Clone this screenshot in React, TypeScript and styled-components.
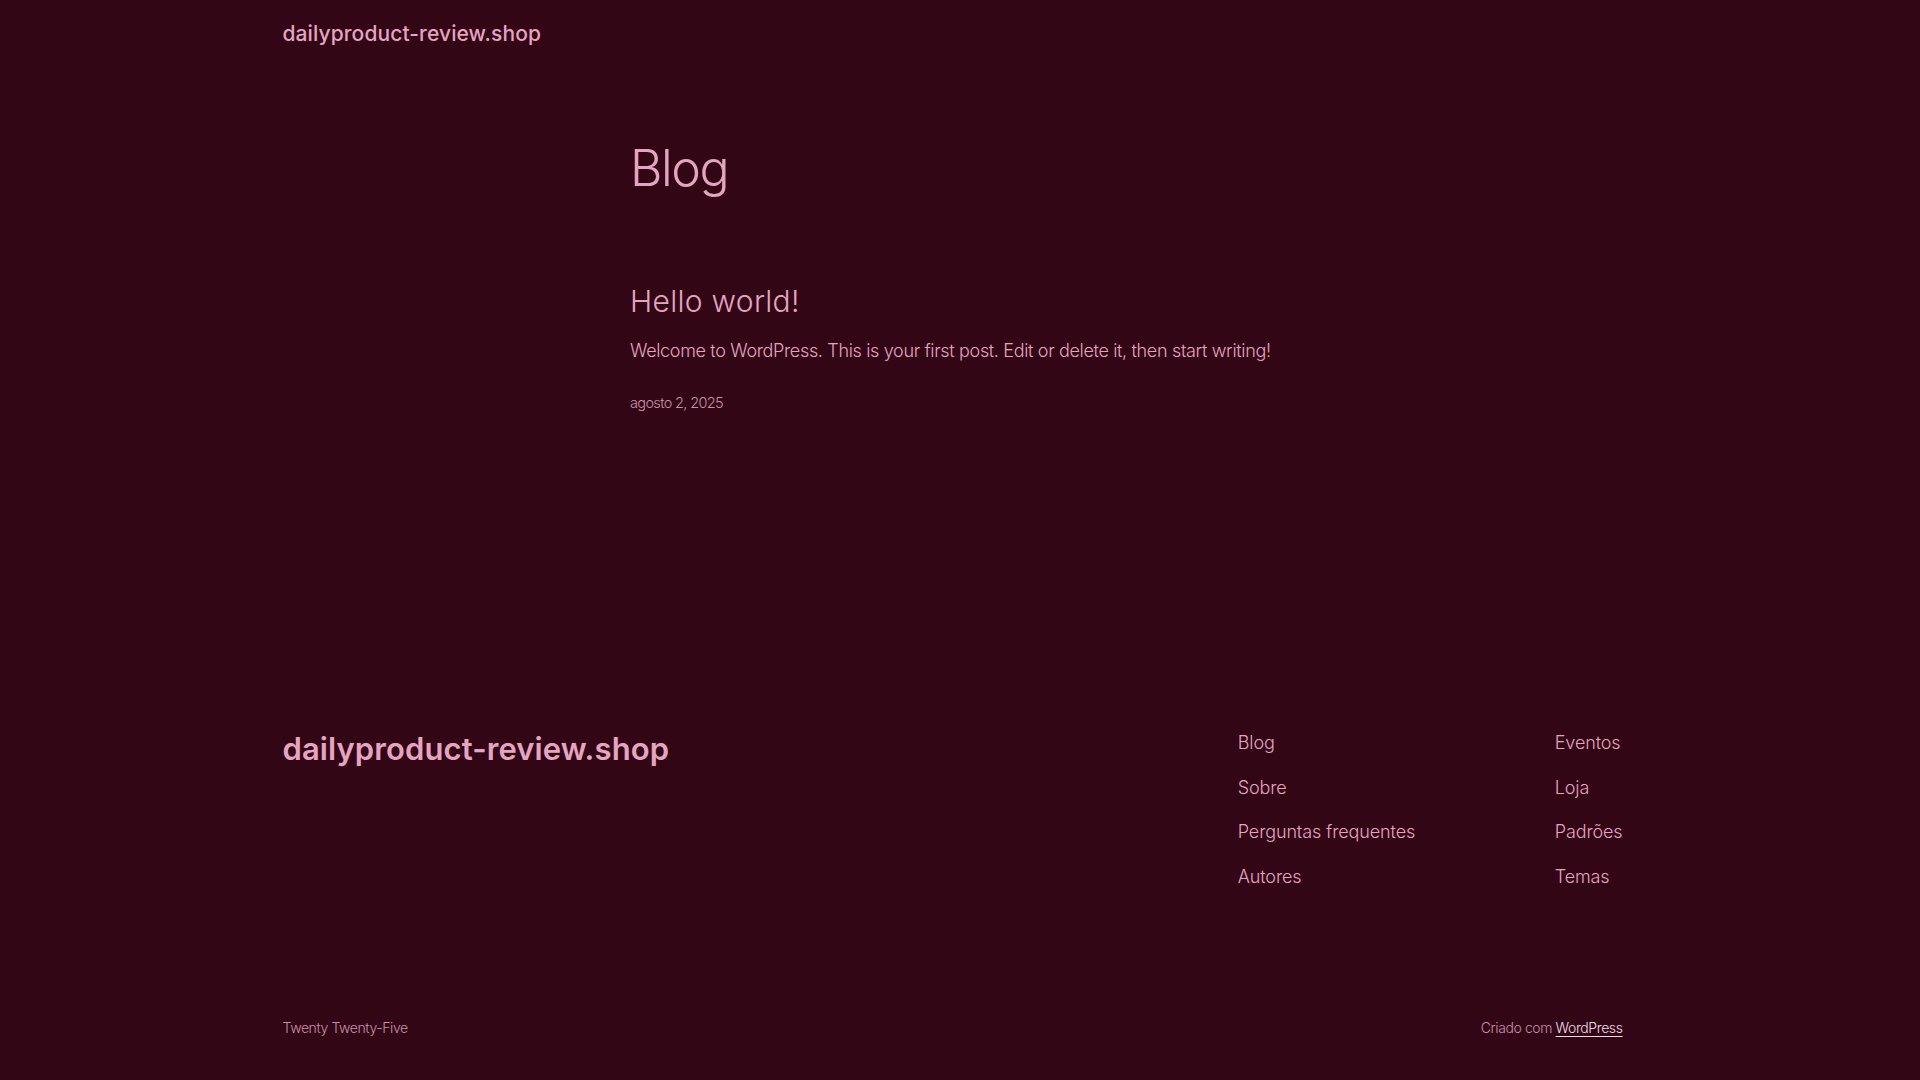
import styled, { createGlobalStyle } from "styled-components";

const GlobalStyle = createGlobalStyle`
	html, body {
		margin: 0;
		padding: 0;
		background: #330616;
	}
	body {
		font-family: Inter, "Noto Sans", sans-serif;
		color: #e4a5c0;
		-webkit-font-smoothing: antialiased;
	}
`;

// right padding stands in for the 15px scrollbar of the reference
const Page = styled.div`
	display: flex;
	flex-direction: column;
	min-height: 1088px;
	padding-right: 15px;
	background: #330616;
`;

const Wrap = styled.div`
	width: 1340px;
	margin: 0 auto;
`;

const Header = styled.header`
	padding: 20px 0;
`;

const SiteTitle = styled.a<{ big?: boolean }>`
	display: block;
	font-size: ${(p) => (p.big ? "31px" : "21px")};
	font-weight: ${(p) => (p.big ? 600 : 500)};
	line-height: ${(p) => (p.big ? "40px" : "28px")};
	letter-spacing: ${(p) => (p.big ? "0.1px" : "0.1px")};
	color: #e4a5c0;
	text-decoration: none;
`;

const Main = styled.main`
	width: 645px;
	margin: 69px auto 0;
`;

const PageTitle = styled.h1`
	margin: 0;
	font-size: 50px;
	font-weight: 300;
	line-height: 62px;
	letter-spacing: -1.4px;
`;

const Post = styled.article`
	margin-top: 84px;
`;

const PostTitle = styled.h2`
	margin: 0;
	font-size: 30px;
	font-weight: 300;
	line-height: 36px;
	letter-spacing: 0.3px;
`;

const Excerpt = styled.p`
	margin: 17.5px 0 0;
	font-size: 18px;
	font-weight: 300;
	line-height: 27px;
	letter-spacing: -0.34px;
`;

const PostDate = styled.time`
	display: block;
	margin-top: 28.5px;
	font-size: 14.5px;
	font-weight: 300;
	line-height: 22px;
	letter-spacing: -0.65px;
	color: #c891aa;
`;

const Footer = styled.footer`
	margin-top: 315px;
	padding-bottom: 50px;
`;

const FooterTop = styled.div`
	display: flex;
	justify-content: space-between;
	align-items: flex-start;
`;

const FooterNav = styled.nav`
	display: grid;
	grid-template-columns: 317px auto;
`;

const NavCol = styled.div`
	display: flex;
	flex-direction: column;
	gap: 17.5px;
`;

const NavLink = styled.a`
	font-size: 18px;
	font-weight: 300;
	line-height: 27px;
	letter-spacing: -0.12px;
	color: #e4a5c0;
	text-decoration: none;
`;

const FooterBottom = styled.div`
	display: flex;
	justify-content: space-between;
	margin-top: 127px;
	font-size: 14px;
	font-weight: 300;
	line-height: 21px;
	letter-spacing: -0.4px;
	color: #c891aa;
`;

const Credit = styled.a`
	color: #f2dce6;
	text-decoration: underline;
	text-underline-offset: 3px;
`;

const App = () => {
	return (
		<Page>
			<GlobalStyle />
			<Wrap>
				<Header>
					<SiteTitle href="#">dailyproduct-review.shop</SiteTitle>
				</Header>
			</Wrap>

			<Main>
				<PageTitle>Blog</PageTitle>
				<Post>
					<PostTitle>Hello world!</PostTitle>
					<Excerpt>
						Welcome to WordPress. This is your first post. Edit or delete it, then start writing!
					</Excerpt>
					<PostDate>agosto 2, 2025</PostDate>
				</Post>
			</Main>

			<Wrap>
				<Footer>
					<FooterTop>
						<SiteTitle href="#" big>
							dailyproduct-review.shop
						</SiteTitle>
						<FooterNav>
							<NavCol>
								<NavLink href="#">Blog</NavLink>
								<NavLink href="#">Sobre</NavLink>
								<NavLink href="#">Perguntas frequentes</NavLink>
								<NavLink href="#">Autores</NavLink>
							</NavCol>
							<NavCol>
								<NavLink href="#">Eventos</NavLink>
								<NavLink href="#">Loja</NavLink>
								<NavLink href="#">Padrões</NavLink>
								<NavLink href="#">Temas</NavLink>
							</NavCol>
						</FooterNav>
					</FooterTop>
					<FooterBottom>
						<span>Twenty Twenty-Five</span>
						<span>
							Criado com <Credit href="#">WordPress</Credit>
						</span>
					</FooterBottom>
				</Footer>
			</Wrap>
		</Page>
	);
};

export default App;
